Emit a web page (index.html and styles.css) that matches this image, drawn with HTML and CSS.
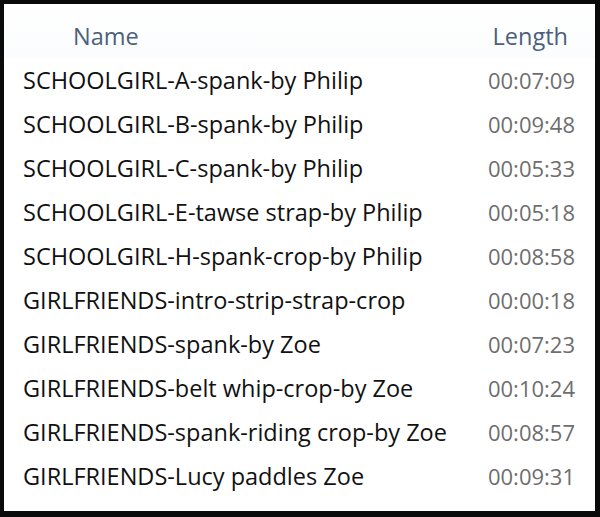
FILE: index.html
```html
<!DOCTYPE html>
<html lang="en">
<head>
    <meta charset="UTF-8">
    <title>Videos</title>
    <link rel="stylesheet" href="styles.css">
</head>
<body>
    <div class="frame">
        <div class="list">
            <div class="header">
                <span class="col-name">Name</span>
                <span class="col-length">Length</span>
            </div>
            <div class="row"><span class="name">SCHOOLGIRL-A-spank-by Philip</span><span class="length">00:07:09</span></div>
            <div class="row"><span class="name">SCHOOLGIRL-B-spank-by Philip</span><span class="length">00:09:48</span></div>
            <div class="row"><span class="name">SCHOOLGIRL-C-spank-by Philip</span><span class="length">00:05:33</span></div>
            <div class="row"><span class="name">SCHOOLGIRL-E-tawse strap-by Philip</span><span class="length">00:05:18</span></div>
            <div class="row"><span class="name">SCHOOLGIRL-H-spank-crop-by Philip</span><span class="length">00:08:58</span></div>
            <div class="row"><span class="name">GIRLFRIENDS-intro-strip-strap-crop</span><span class="length">00:00:18</span></div>
            <div class="row"><span class="name">GIRLFRIENDS-spank-by Zoe</span><span class="length">00:07:23</span></div>
            <div class="row"><span class="name">GIRLFRIENDS-belt whip-crop-by Zoe</span><span class="length">00:10:24</span></div>
            <div class="row"><span class="name">GIRLFRIENDS-spank-riding crop-by Zoe</span><span class="length">00:08:57</span></div>
            <div class="row"><span class="name">GIRLFRIENDS-Lucy paddles Zoe</span><span class="length">00:09:31</span></div>
        </div>
    </div>
</body>
</html>
```

FILE: styles.css
```css
html, body {
    margin: 0;
    padding: 0;
    background-color: #000;
}

.frame {
    width: 600px;
    height: 517px;
    box-sizing: border-box;
    padding: 4px 5px 6px 4px;
    background-color: #0a0a0a;
}

.list {
    height: 100%;
    background-color: #fff;
    font-family: 'Open Sans', 'Noto Sans', sans-serif;
    font-size: 23.5px;
    color: #111;
}

.header {
    display: flex;
    justify-content: space-between;
    align-items: center;
    box-sizing: border-box;
    height: 54px;
    padding: 10px 27px 0 69px;
    color: #4c5f7c;
    background: linear-gradient(#fff, #fbfcfd);
}

.row {
    display: flex;
    justify-content: space-between;
    align-items: center;
    height: 44px;
    padding: 0 20px 0 19px;
}

.length {
    font-size: 22px;
    color: #6e6e6e;
}
```
